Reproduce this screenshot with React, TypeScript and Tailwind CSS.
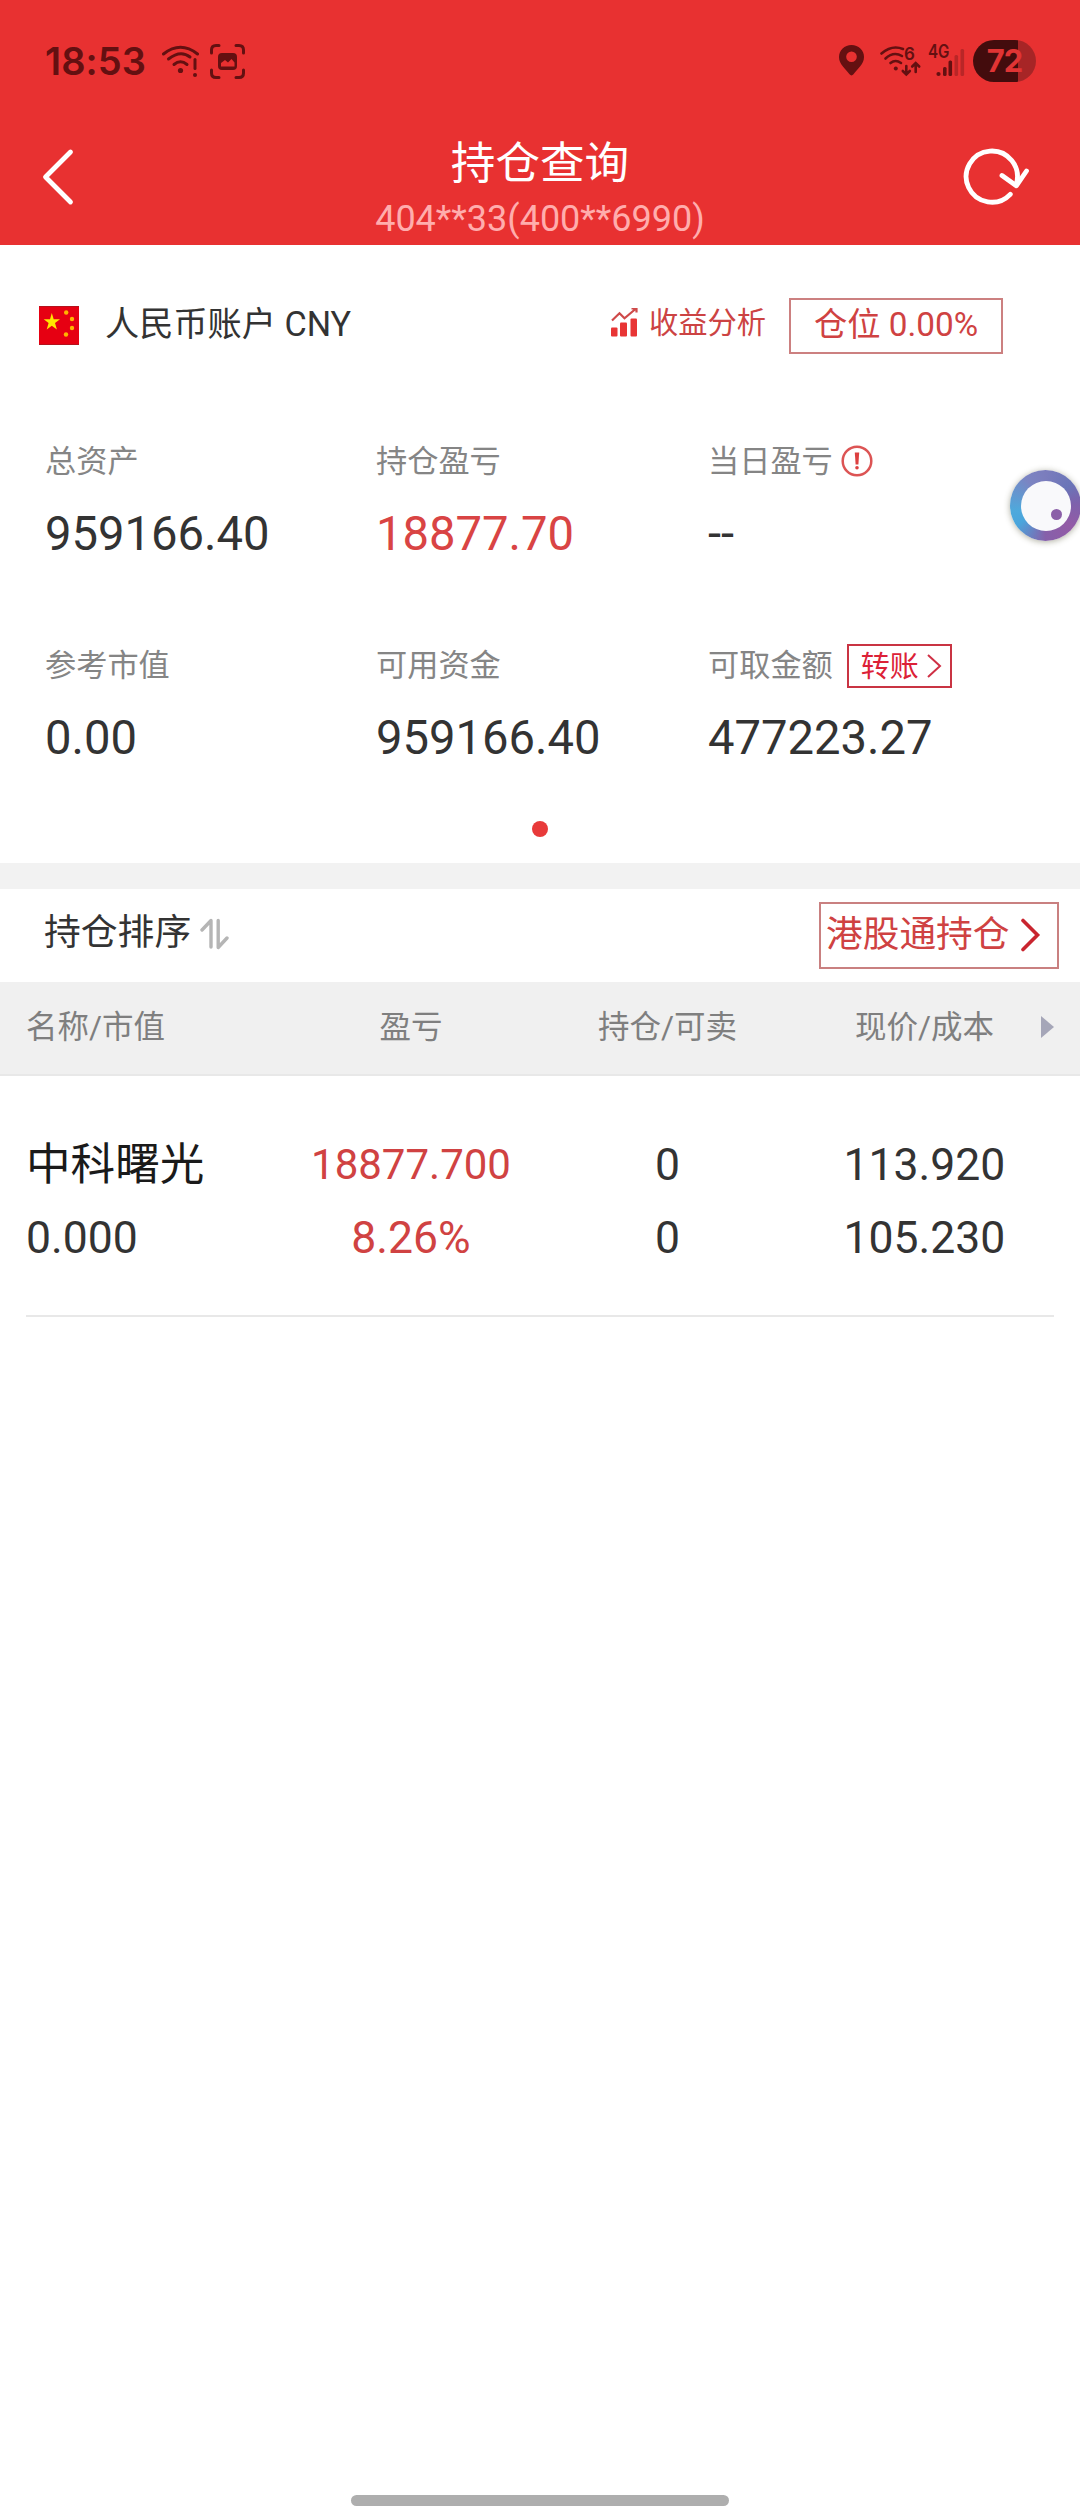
import type { ReactNode } from 'react'

const holdings = [
    {
        name: '中科曙光',
        marketValue: '0.000',
        profit: '18877.700',
        profitRate: '8.26%',
        amount: '0',
        sellable: '0',
        price: '113.920',
        cost: '105.230'
    }
]

const StatusBar = () => (
    <div className="flex h-[122px] items-center justify-between pl-[44px] pr-[44px]">
        <div className="flex items-center">
            <span className="w-[116px] pl-[1px] font-['Inter'] text-[38px] font-semibold leading-none tracking-[0.100px] text-[#641011]">18:53</span>
            {/* Wifi con aviso */}
            <svg width="42" height="36" viewBox="160 43.500 42 36" fill="none" stroke="#641011" strokeWidth="3" strokeLinecap="round">
                <path d="M163.500 54.500Q180.500 41 197.500 54.500" />
                <path d="M168.500 59.500Q180.500 50 190 57.500" />
                <path d="M174 65Q180.500 59.500 187 65" />
                <circle cx="180.500" cy="71" r="2.600" fill="#641011" stroke="none" />
                <path d="M195 60V69" />
                <circle cx="195" cy="75.500" r="2" fill="#641011" stroke="none" />
            </svg>
            <svg className="ml-[7px]" width="37" height="37" viewBox="209 43 37 37" fill="none">
                <path d="M211.500 53V50Q211.500 45.500 216 45.500H219M236 45.500H239Q243.500 45.500 243.500 50V53M243.500 70V73Q243.500 77.500 239 77.500H236M219 77.500H216Q211.500 77.500 211.500 73V70" stroke="#641011" strokeWidth="3" strokeLinecap="round" />
                <rect x="218" y="53" width="19" height="17" rx="4" fill="#641011" />
                <path d="M221 66.500V63L225 60L228 62.500L231.500 59L234.500 62.500V66.500Z" fill="#e83030" />
            </svg>
        </div>
        <div className="flex items-center">
            <svg width="26" height="32" viewBox="839 45 26 32">
                <path fillRule="evenodd" fill="#641011" d="M851.500 45C844.500 45 839 50.300 839 57C839 64.500 845.500 68.500 849.500 74.300Q851.500 76.500 853.500 74.300C857.500 68.500 864 64.500 864 57C864 50.300 858.500 45 851.500 45ZM851.500 51.500A5.300 5.300 0 1 1 851.500 62.100A5.300 5.300 0 1 1 851.500 51.500Z" />
            </svg>
            <svg className="ml-[14px]" width="44" height="36" viewBox="879 43 44 36" fill="none" stroke="#641011" strokeWidth="2.600" strokeLinecap="round">
                <path d="M881.500 53.500Q892 44.500 903 49" />
                <path d="M885.500 58.500Q893.500 51 902 56" />
                <path d="M890.500 63Q895.500 59 901 63" />
                <circle cx="895.800" cy="68.500" r="2" fill="#641011" stroke="none" />
                <text x="904" y="59.500" fill="#641011" stroke="none" fontFamily="Inter" fontWeight="600" fontSize="17">6</text>
                <path d="M906.300 66V74M902.800 71L906.300 74.500L909.800 71M915.700 72V63.500M912.200 66.500L915.700 63L919.200 66.500" />
            </svg>
            <svg className="ml-[3px]" width="40" height="46" viewBox="926 38 40 46">
                <text x="928" y="58" fill="#641011" fontFamily="Inter" fontWeight="600" fontSize="18" textLength="21.500" lengthAdjust="spacingAndGlyphs">4G</text>
                <circle cx="938.500" cy="74" r="2.100" fill="#641011" />
                <rect x="943" y="67" width="3.600" height="9" rx="1.500" fill="#641011" />
                <rect x="948.500" y="60.500" width="3.600" height="15.500" rx="1.500" fill="#641011" />
                <rect x="954.500" y="55" width="3.600" height="21" rx="1.500" fill="#b92627" />
                <rect x="960.500" y="49" width="3.600" height="27" rx="1.500" fill="#b92627" />
            </svg>
            <div className="ml-[7px] flex h-[42px] w-[63px] items-center justify-center rounded-full bg-[linear-gradient(90deg,#430c0d_45px,#a72526_45px)]">
                <span className="pb-[2px] font-['Inter'] text-[31px] font-bold leading-none tracking-[-1px] text-[#e03434]">72</span>
            </div>
        </div>
    </div>
)

const NavBar = () => (
    <div className="flex h-[123px] items-start justify-between pl-[40px] pr-[48px]">
        <svg className="mt-[26px]" width="34" height="58" viewBox="40 148 34 58" fill="none">
            <path d="M70.500 152L45.500 177L70.500 202" stroke="#fff" strokeWidth="4.800" strokeLinecap="round" strokeLinejoin="round" />
        </svg>
        <div className="ml-[44px] flex flex-col items-center pt-[15px]">
            <h1 className="flex h-[54px] items-center text-[44.600px] leading-none text-white">持仓查询</h1>
            <p className="flex h-[56px] items-center text-[36px] leading-none text-[#ffadad]">404**33(400**6990)</p>
        </div>
        <svg className="mt-[26px]" width="70" height="60" viewBox="962.500 147.500 70 60" fill="none" stroke="#fff" strokeWidth="4.800" strokeLinecap="round" strokeLinejoin="round">
            <path d="M1010.800 193.800A25.600 25.600 0 1 1 1016.800 183.500" />
            <path d="M1002.500 175L1016.800 185.300L1027 170.500" />
        </svg>
    </div>
)

const ChinaFlag = () => (
    <svg className="mt-[4px]" width="40" height="39" viewBox="0 0 40 39">
        <rect width="40" height="39" fill="#e60012" />
        <path d="M0 0H40V1H0ZM0 38H40V39H0Z" fill="#b5121c" />
        <path d="M12.800 7L14.700 13.200L21 13.300L16 17.100L17.900 23.500L12.800 19.700L7.700 23.500L9.600 17.100L4.700 13.300L11 13.200Z" fill="#ffe600" />
        <g fill="#ffb400">
            <circle cx="27.200" cy="6.500" r="2.200" />
            <circle cx="33" cy="13" r="2.200" />
            <circle cx="33" cy="22" r="2.200" />
            <circle cx="27" cy="28.500" r="2.200" />
        </g>
    </svg>
)

const AccountRow = () => (
    <div className="flex h-[156px] items-center pl-[39px] pr-[77px] leading-none">
        <ChinaFlag />
        <span className="ml-[26px] pt-[2px] text-[34.200px] text-[#333]">人民币账户 CNY</span>
        <div className="ml-auto flex items-center">
            <svg width="27" height="30" viewBox="0 0.500 27 30">
                <path d="M1 13L8.500 5.800L13.500 10.800L24.500 1.500M20.500 1H25.500V5" fill="none" stroke="#cf4a4a" strokeWidth="2.200" />
                <rect x="0" y="20" width="6.500" height="9" rx="1" fill="#e83535" />
                <rect x="9" y="15" width="7" height="14" rx="1" fill="#e83535" />
                <rect x="19.500" y="11" width="6.500" height="18" rx="1" fill="#e83535" />
            </svg>
            <span className="ml-[11px] pt-[2px] text-[29.250px] text-[#cc4343]">收益分析</span>
        </div>
        <div className="ml-[23px] mt-[6px] flex h-[56px] w-[214px] items-center justify-center border-2 border-[#cc8080] pb-[3px] text-[33.300px] text-[#cf4242]">
            仓位 0.00%
        </div>
    </div>
)

type StatProps = {
    label: string
    value: string
    red?: boolean
    extra?: ReactNode
}

const Stat = ({ label, value, red, extra }: StatProps) => (
    <div className="leading-none">
        <div className="flex h-[72px] items-center text-[31.200px] text-[#858585]">
            <span className="pt-[3px]">{label}</span>
            {extra}
        </div>
        <div className={`flex h-[77px] items-center text-[47.200px] ${red ? 'text-[#d94444]' : 'text-[#333]'}`}>{value}</div>
    </div>
)

const WarnIcon = () => (
    <svg className="ml-[8px] mt-[2px]" width="32" height="32" viewBox="0 0 32 32">
        <circle cx="16" cy="16" r="14.300" fill="none" stroke="#dc5454" strokeWidth="2.500" />
        <path d="M13.800 7.500H18.200L17.400 19.500H14.600Z" fill="#dc4040" />
        <circle cx="16" cy="22.800" r="1.800" fill="#dc4040" />
    </svg>
)

const TransferButton = () => (
    <button className="ml-[14px] mt-[4px] flex h-[44px] w-[105px] items-center border-2 border-[#c93443] pl-[12px] text-[29px] text-[#dc2137]">
        <span className="pt-[2px]">转账</span>
        <svg className="ml-[7px]" width="16" height="28" viewBox="0 0 16 28" fill="none">
            <path d="M2 3L14 14L2 25" stroke="#cf3045" strokeWidth="2" />
        </svg>
    </button>
)

const Summary = () => (
    <>
        <div className="mt-[23px] grid grid-cols-[331px_332px_1fr] gap-y-[55px] pl-[45px]">
            <Stat label="总资产" value="959166.40" />
            <Stat label="持仓盈亏" value="18877.70" red />
            <Stat label="当日盈亏" value="--" extra={<WarnIcon />} />
            <Stat label="参考市值" value="0.00" />
            <Stat label="可用资金" value="959166.40" />
            <Stat label="可取金额" value="477223.27" extra={<TransferButton />} />
        </div>
        <div className="flex h-[86px] items-start justify-center pt-[44px]">
            <span className="h-[16px] w-[16px] rounded-full bg-[#e83a3a]" />
        </div>
    </>
)

const SortRow = () => (
    <div className="flex h-[93px] items-center pl-[44px] pr-[21px] leading-none">
        <div className="flex items-center pb-[5px]">
            <span className="text-[36.800px] text-[#333]">持仓排序</span>
            <svg className="ml-[9px] mt-[2px]" width="30" height="32" viewBox="0 0 30 32" fill="none" stroke="#b5b5b5" strokeWidth="3.400" strokeLinecap="round" strokeLinejoin="round">
                <path d="M11 29V2.500L2 12M18.200 2.500V29.500L27 20" />
            </svg>
        </div>
        <button className="ml-auto flex h-[67px] w-[240px] items-center border-2 border-[#c98080] pb-[1px] pl-[5px] text-[36.700px] text-[#cf4242]">
            港股通持仓
            <svg className="ml-[10px]" width="22" height="34" viewBox="0 0 22 34" fill="none">
                <path d="M4 2.500L18.500 17L4 31.500" stroke="#c9252f" strokeWidth="3.600" strokeLinecap="round" />
            </svg>
        </button>
    </div>
)

const HoldingsTable = () => (
    <>
        <div className="relative grid h-[94px] grid-cols-[257px_256px_257px_257px] items-center border-b-2 border-[#e8e8e8] bg-[#f0f0f0] px-[26px] pb-[1px] text-center text-[31.500px] leading-none text-[#7f7f7f]">
            <span className="text-left">名称/市值</span>
            <span>盈亏</span>
            <span>持仓/可卖</span>
            <span>现价/成本</span>
            <svg className="absolute right-[26px] top-[34px]" width="13" height="22" viewBox="0 0 13 22">
                <path d="M0 0L13 11L0 22Z" fill="#a5a6b8" />
            </svg>
        </div>
        {holdings.map((item) => (
            <div
                key={item.name}
                className="mx-[26px] grid grid-cols-[257px_256px_257px_257px] grid-rows-[74px_73px] items-center border-b-2 border-[#e8e8e8] pb-[40px] pt-[52px] text-center text-[44.500px] leading-none text-[#333]"
            >
                <span className="text-left text-[44.600px] text-[#1a1a1a]">{item.name}</span>
                <span className="text-[42px] text-[#d04242]">{item.profit}</span>
                <span>{item.amount}</span>
                <span>{item.price}</span>
                <span className="text-left">{item.marketValue}</span>
                <span className="text-[#d04242]">{item.profitRate}</span>
                <span>{item.sellable}</span>
                <span>{item.cost}</span>
            </div>
        ))}
    </>
)

// Botón flotante del sistema, pegado al borde derecho
const FloatingBall = () => (
    <div className="absolute left-[1010px] top-[470px] flex h-[71px] w-[71px] items-center justify-center rounded-full bg-[conic-gradient(from_0deg,#7b7dbd,#6a75b8_50deg,#7d62ac_85deg,#935ba6_130deg,#8660aa_180deg,#4aa5dc_235deg,#4ea9dc_260deg,#7b84c2_325deg,#7b7dbd)] shadow-[0_1px_6px_rgba(70,70,40,0.45)]">
        <div className="relative h-[50px] w-[50px] rounded-full bg-[#f9f9fb]">
            <span className="absolute left-[30px] top-[28px] h-[11px] w-[11px] rounded-full bg-[#8b5fa8]" />
        </div>
    </div>
)

export default function App() {
    return (
        <div className="relative flex h-[2520px] w-[1080px] flex-col overflow-hidden whitespace-nowrap bg-white font-['Roboto','Noto_Sans_CJK_SC',sans-serif]">
            <header className="h-[245px] shrink-0 bg-[#e83131]">
                <StatusBar />
                <NavBar />
            </header>
            <AccountRow />
            <Summary />
            <div className="h-[26px] bg-[#f2f2f2]" />
            <SortRow />
            <HoldingsTable />
            <div className="mx-auto mb-[14px] mt-auto h-[11px] w-[378px] rounded-full bg-[#aeaeae]" />
            <FloatingBall />
        </div>
    )
}
